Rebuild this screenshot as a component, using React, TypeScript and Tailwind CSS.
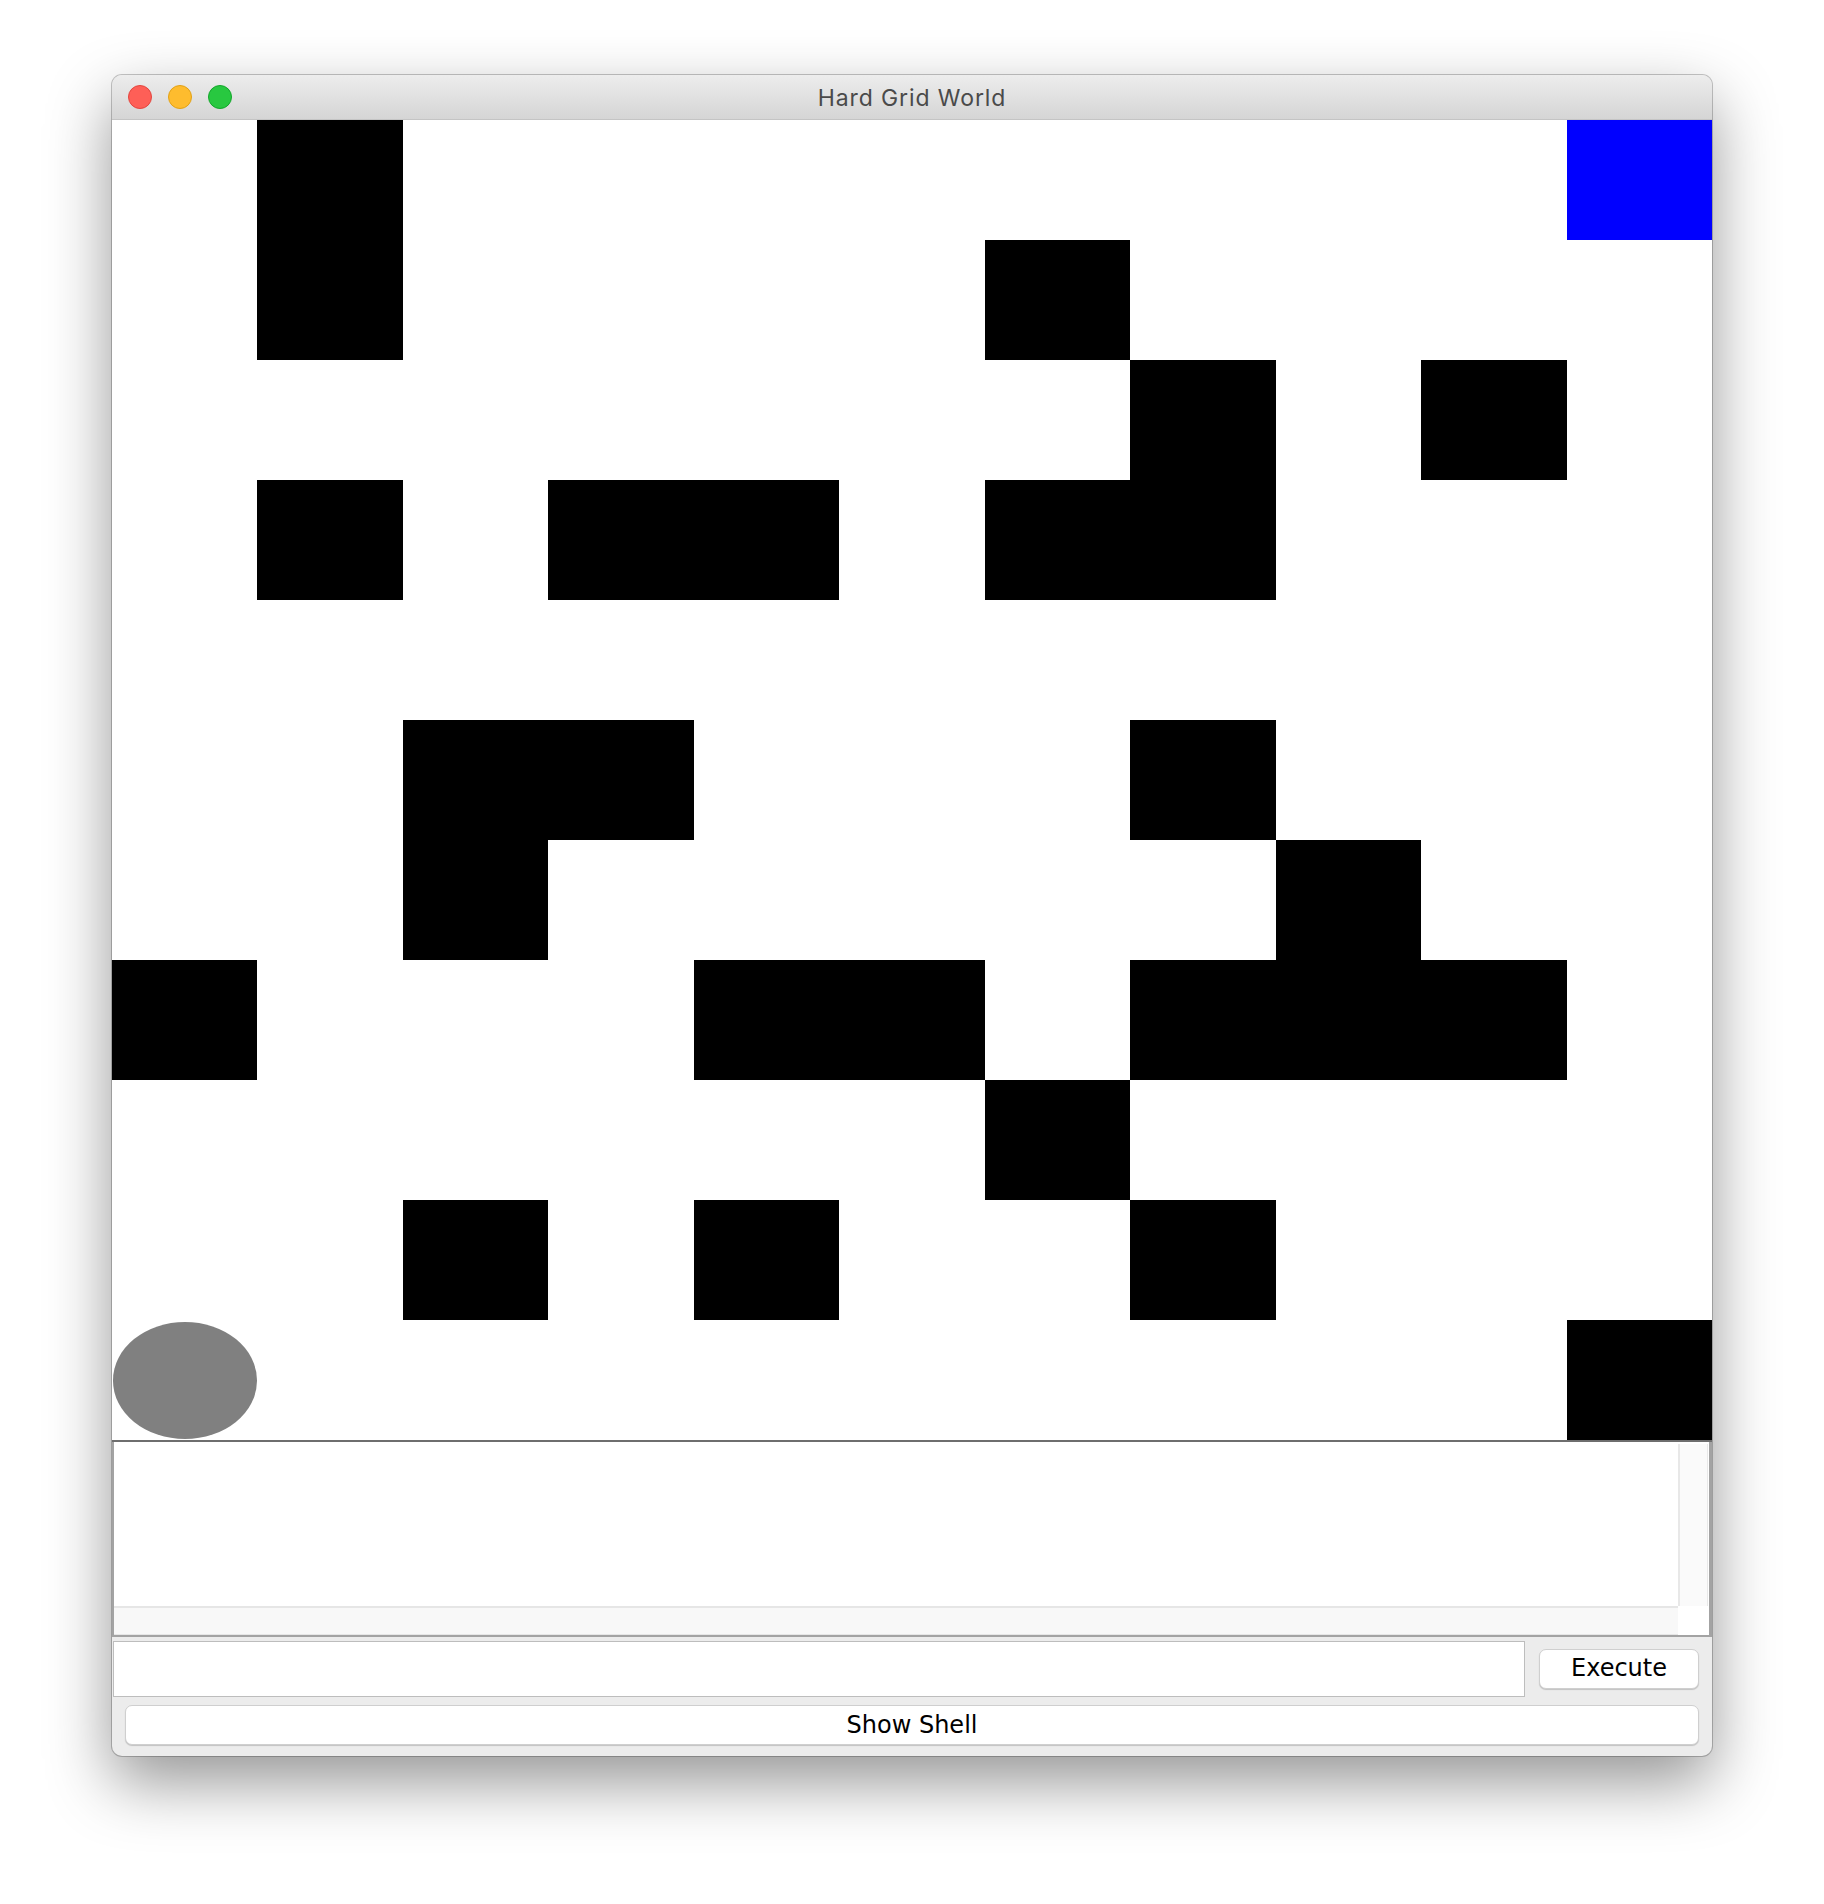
const MAP = [
  '.#........B',
  '.#....#....',
  '.......#.#.',
  '.#.##.##...',
  '...........',
  '..##...#...',
  '..#.....#..',
  '#...##.###.',
  '......#....',
  '..#.#..#...',
  'A.........#',
]

function Cell({ kind }: { kind: string }) {
  if (kind === '#') return <div className="bg-black" />
  if (kind === 'B') return <div className="bg-[#0000ff]" />
  if (kind === 'A')
    return (
      <div className="flex bg-white pt-[2px] pl-[1px]">
        <div className="h-[117px] w-[145px] rounded-[50%] bg-[#808080]" />
      </div>
    )
  return <div className="bg-white" />
}

export default function App() {
  return (
    <div className="h-[1904px] w-[1824px] overflow-hidden bg-white pt-[75px] pl-[112px]">
      <div className="flex h-[1681px] w-[1600px] flex-col overflow-hidden rounded-[10px] bg-[#ececec] shadow-[0_0_0_1px_rgba(0,0,0,0.22),0_26px_64px_rgba(0,0,0,0.42)]">
        {/* title bar */}
        <div className="relative flex h-[45px] shrink-0 items-center border-b border-[#c4c4c4] bg-gradient-to-b from-[#ededed] to-[#d5d5d5] pl-[16px]">
          <div className="flex gap-[16px]">
            <div className="h-[24px] w-[24px] rounded-full border border-[#e2463f] bg-[#fe5f57]" />
            <div className="h-[24px] w-[24px] rounded-full border border-[#e1a116] bg-[#febc2e]" />
            <div className="h-[24px] w-[24px] rounded-full border border-[#13a62b] bg-[#28c840]" />
          </div>
          <div className="absolute inset-0 flex items-center justify-center pt-[3px] font-['Inter',sans-serif] text-[23px] tracking-[0.9px] text-[#4a4a4a]">
            Hard Grid World
          </div>
        </div>

        {/* grid world */}
        <div className="grid h-[1320px] w-[1600px] shrink-0 grid-cols-11 grid-rows-11">
          {MAP.flatMap((row, r) => row.split('').map((k, c) => <Cell key={r + '-' + c} kind={k} />))}
        </div>
        <div className="h-[2px] shrink-0 bg-[#6e6e6e]" />

        {/* console */}
        <div className="flex h-[195px] shrink-0 flex-col border-r-[3px] border-b-2 border-l-2 border-[#a3a3a3] bg-white">
          <div className="flex flex-1">
            <div className="flex-1 bg-white" />
            <div className="mt-[2px] mr-[1px] w-[30px] border-r border-l-2 border-[#e8e8e8] bg-[#fafafa]" />
          </div>
          <div className="flex h-[29px]">
            <div className="flex-1 border-t-2 border-b border-[#e6e6e6] bg-[#f8f8f8]" />
            <div className="w-[31px] bg-white" />
          </div>
        </div>

        {/* controls */}
        <div className="flex flex-1 flex-col pt-[4px] font-['DejaVu_Sans',sans-serif] text-[24px] text-black">
          <div className="flex h-[56px] items-center">
            <div className="ml-[1px] h-[56px] w-[1412px] border border-[#bdbdbd] bg-white" />
            <button className="ml-[14px] flex h-[40px] w-[160px] items-center justify-center rounded-[7px] border border-[#cfcfcf] bg-white pb-[2px] leading-none shadow-[0_1px_1px_rgba(0,0,0,0.18)]">
              Execute
            </button>
          </div>
          <button className="mt-[8px] ml-[13px] flex h-[40px] w-[1574px] items-center justify-center rounded-[7px] border border-[#cfcfcf] bg-white leading-none shadow-[0_1px_1px_rgba(0,0,0,0.18)]">
            Show Shell
          </button>
        </div>
      </div>
    </div>
  )
}
